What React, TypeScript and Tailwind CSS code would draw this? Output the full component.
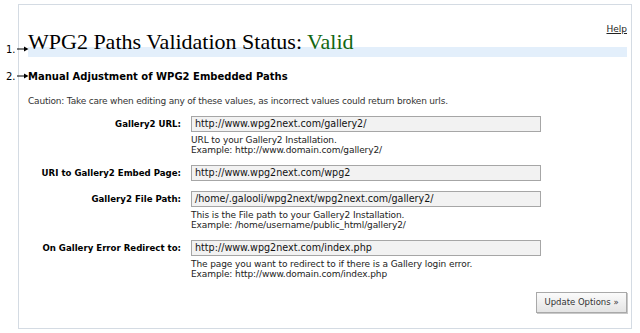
import React from 'react'

const fields = [
	{
		label: 'Gallery2 URL:',
		value: 'http://www.wpg2next.com/gallery2/',
		help: ['URL to your Gallery2 Installation.', 'Example: http://www.domain.com/gallery2/'],
	},
	{
		label: 'URI to Gallery2 Embed Page:',
		value: 'http://www.wpg2next.com/wpg2',
		help: [],
	},
	{
		label: 'Gallery2 File Path:',
		value: '/home/.galooli/wpg2next/wpg2next.com/gallery2/',
		help: ['This is the File path to your Gallery2 Installation.', 'Example: /home/username/public_html/gallery2/'],
	},
	{
		label: 'On Gallery Error Redirect to:',
		value: 'http://www.wpg2next.com/index.php',
		help: ['The page you want to redirect to if there is a Gallery login error.', 'Example: http://www.domain.com/index.php'],
	},
]

// numbered arrows drawn over the panel's left edge
function Marker({ n, top }: { n: string; top: string }) {
	return (
		<div className={`absolute left-[6px] ${top} flex items-start font-['DejaVu_Sans',sans-serif] text-[10px] leading-[10px] text-black`}>
			<span>{n}</span>
			<svg width="12" height="6" viewBox="0 0 12 6" className="ml-[1px] mt-[1px]">
				<line x1="0" y1="3" x2="9" y2="3" stroke="#000" strokeWidth="1" />
				<path d="M7 0.5 L11.5 3 L7 5.5 Z" fill="#000" />
			</svg>
		</div>
	)
}

export default function App() {
	return (
		<div className="relative w-[640px] h-[333px] bg-white font-['DejaVu_Sans',sans-serif] text-[#222]">
			<Marker n="1." top="top-[41px]" />
			<Marker n="2." top="top-[68px]" />

			<div className="ml-[18px] mt-[4px] w-[614px] h-[325px] border border-[#d4dbe3] pl-[9px] pr-[4px]">
				<div className="flex justify-end pt-[19px] h-[27px]">
					<a className="text-[9px] leading-[11px] text-[#222] underline">Help</a>
				</div>

				<div className="h-[26px] bg-[linear-gradient(to_bottom,transparent_0px,transparent_15px,#e3effb_15px,#e3effb_25px,transparent_25px)]">
					<h2 className="font-['Liberation_Serif',serif] text-[22px] leading-[20px] text-black whitespace-nowrap">
						WPG2 Paths Validation Status: <span className="text-[#116611]">Valid</span>
					</h2>
				</div>

				<h3 className="mt-[13px] text-[10px] leading-[12px] font-bold text-black">
					Manual Adjustment of WPG2 Embedded Paths
				</h3>

				<p className="mt-[13px] text-[9px] leading-[10px] text-[#333] tracking-[-0.2px]">
					Caution: Take care when editing any of these values, as incorrect values could return broken urls.
				</p>

				<div className="mt-[10px] flex flex-col gap-[10px]">
					{fields.map((f, i) => (
						<div key={i} className="flex">
							<div className="w-[153px] h-[16px] flex items-center justify-end text-[8.6px] font-bold text-black whitespace-nowrap">
								{f.label}
							</div>
							<div className="ml-[10px] flex flex-col">
								<div className="w-[350px] h-[16px] border border-[#a6a6a6] bg-[#f2f2f2] px-[3px] text-[9.6px] leading-[14px] text-[#111] whitespace-nowrap overflow-hidden">
									{f.value}
								</div>
								{f.help.length > 0 && (
									<div className="mt-[3px] text-[9px] leading-[10px] text-[#222] tracking-[-0.1px]">
										{f.help.map((h, j) => (
											<div key={j}>{h}</div>
										))}
									</div>
								)}
							</div>
						</div>
					))}
				</div>

				<div className="flex justify-end mt-[13px]">
					<button className="w-[91px] h-[21px] border border-[#a9a9a9] bg-[linear-gradient(to_bottom,#fbfbfb,#e4e4e4)] text-[8.5px] text-[#333] shadow-[1px_1px_0_#c8c8c8]">
						Update Options »
					</button>
				</div>
			</div>
		</div>
	)
}
